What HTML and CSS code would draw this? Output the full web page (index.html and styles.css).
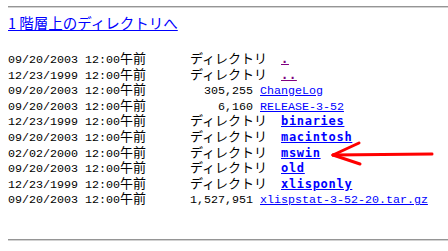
FILE: index.html
```html
<!DOCTYPE html>
<html lang="ja">
<head>
<meta charset="utf-8">
<title>Directory listing</title>
<link rel="stylesheet" href="styles.css">
</head>
<body>
<hr class="rule">
<a class="up" href="#">1 階層上のディレクトリへ</a>
<div class="listing">
  <div class="row"><span class="dt">09/20/2003 12:00<span class="jp">午前</span></span><span class="dir jp">ディレクトリ</span><a class="d v" href="#">.</a></div>
  <div class="row"><span class="dt">12/23/1999 12:00<span class="jp">午前</span></span><span class="dir jp">ディレクトリ</span><a class="d v" href="#">..</a></div>
  <div class="row"><span class="dt">09/20/2003 12:00<span class="jp">午前</span></span><span class="size">305,255</span><a class="f" href="#">ChangeLog</a></div>
  <div class="row"><span class="dt">09/20/2003 12:00<span class="jp">午前</span></span><span class="size">6,160</span><a class="f" href="#">RELEASE-3-52</a></div>
  <div class="row"><span class="dt">12/23/1999 12:00<span class="jp">午前</span></span><span class="dir jp">ディレクトリ</span><a class="d" href="#">binaries</a></div>
  <div class="row"><span class="dt">09/20/2003 12:00<span class="jp">午前</span></span><span class="dir jp">ディレクトリ</span><a class="d" href="#">macintosh</a></div>
  <div class="row"><span class="dt">02/02/2000 12:00<span class="jp">午前</span></span><span class="dir jp">ディレクトリ</span><a class="d" href="#">mswin</a></div>
  <div class="row"><span class="dt">09/20/2003 12:00<span class="jp">午前</span></span><span class="dir jp">ディレクトリ</span><a class="d" href="#">old</a></div>
  <div class="row"><span class="dt">12/23/1999 12:00<span class="jp">午前</span></span><span class="dir jp">ディレクトリ</span><a class="d" href="#">xlisponly</a></div>
  <div class="row"><span class="dt">09/20/2003 12:00<span class="jp">午前</span></span><span class="size">1,527,951</span><a class="f" href="#">xlispstat-3-52-20.tar.gz</a></div>
</div>
<hr class="rule bottom">
<svg class="arrow" width="110" height="30" viewBox="0 0 110 30">
  <g stroke="#ff0000" stroke-width="3" stroke-linecap="round" fill="none">
    <line x1="3" y1="15" x2="102" y2="14"/>
    <line x1="3" y1="15" x2="29" y2="3"/>
    <line x1="3" y1="15" x2="30" y2="24"/>
  </g>
</svg>
</body>
</html>
```

FILE: styles.css
```css
html, body {
  background: #ffffff;
}
body {
  margin: 0;
  padding: 6px 0 0 8px;
  position: relative;
  color: #000000;
  font-family: "Liberation Mono", "Noto Sans CJK JP", monospace;
  font-size: 11.67px;
  overflow: hidden;
}
.rule {
  margin: 0;
  height: 0;
  border: 0;
  border-top: 1px solid #959595;
  border-bottom: 1px solid #d2d2d2;
}
.rule.bottom {
  margin-top: 32px;
}
.up {
  display: block;
  margin-top: 5px;
  width: max-content;
  font-family: "Noto Sans CJK JP", sans-serif;
  font-size: 14.5px;
  line-height: 20px;
  color: #0000ff;
  text-decoration: underline;
}
.listing {
  margin-top: 18px;
}
.row {
  display: flex;
  align-items: baseline;
  height: 15.6px;
  line-height: 15px;
  white-space: pre;
}
.jp {
  font-family: "Noto Sans CJK JP", sans-serif;
  font-size: 13px;
  line-height: 1;
}
.dt {
  width: 182px;
  flex: none;
}
.dir {
  width: 91px;
  flex: none;
}
.size {
  width: 63px;
  margin-right: 7px;
  text-align: right;
  flex: none;
}
a {
  color: #0000ff;
  text-decoration: underline;
}
.f {
  font-family: "Liberation Mono", monospace;
}
.d {
  font-family: "DejaVu Sans Mono", monospace;
  font-weight: bold;
  font-size: 12px;
  letter-spacing: 0.7px;
}
.d.v {
  color: #800080;
}
.arrow {
  position: absolute;
  left: 330px;
  top: 140px;
}
```
